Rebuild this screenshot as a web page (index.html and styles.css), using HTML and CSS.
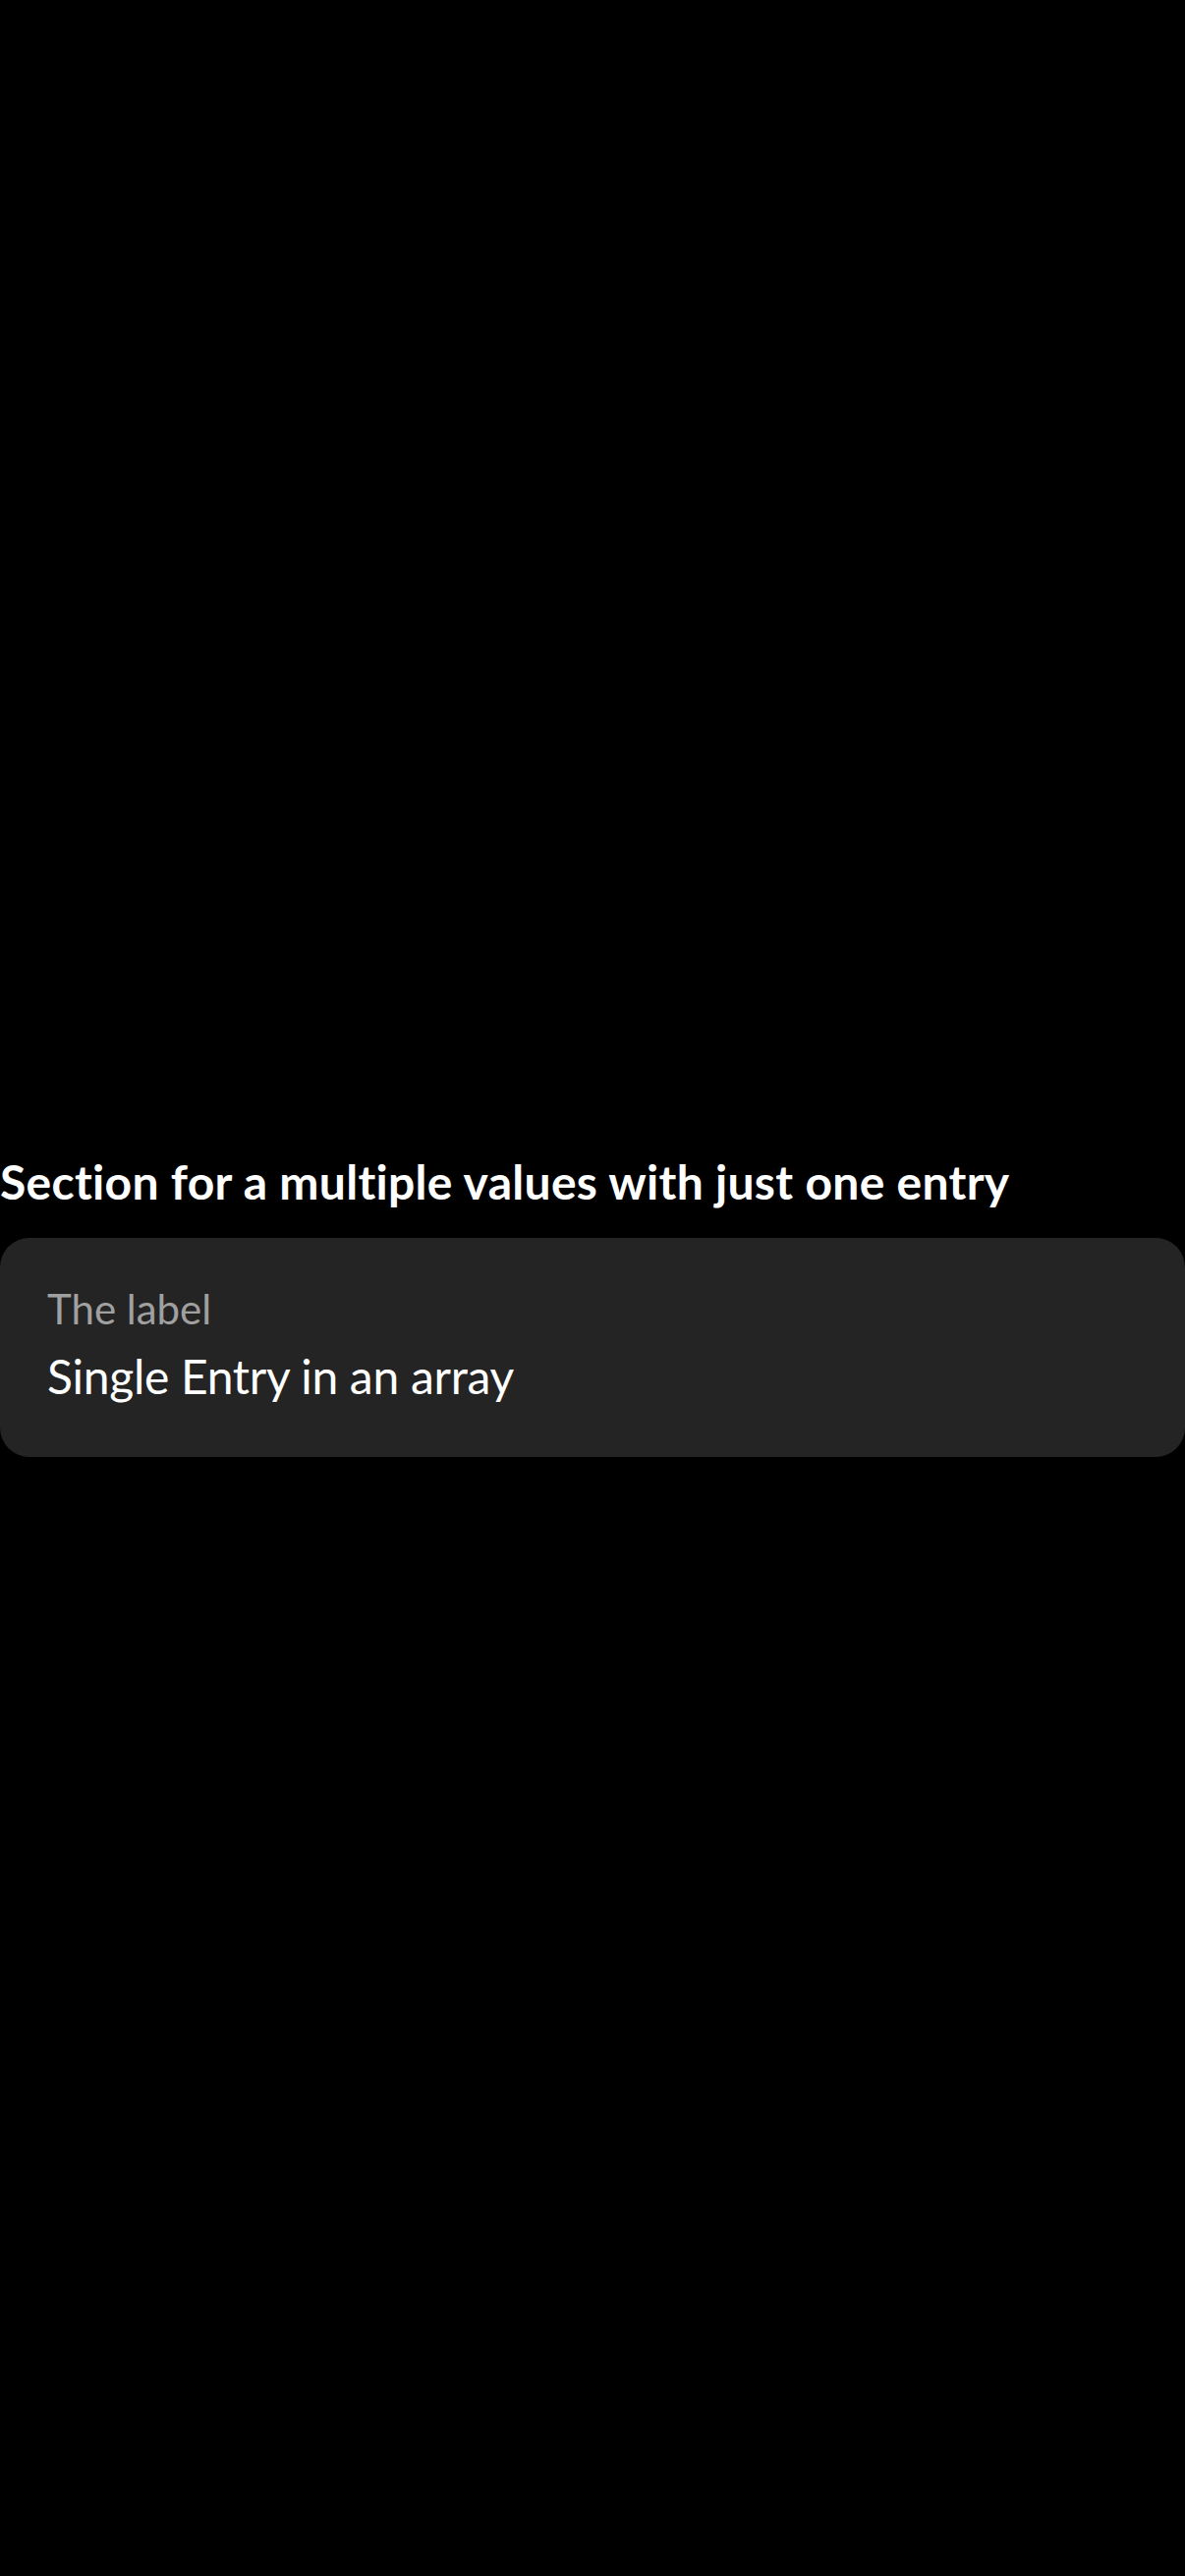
FILE: index.html
```html
<!DOCTYPE html>
<html>
<head>
<meta charset="utf-8">
<link rel="stylesheet" href="styles.css">
</head>
<body>
<main class="screen">
  <section class="section">
    <h2 class="section-title">Section for a multiple values with just one entry</h2>
    <div class="card">
      <div class="label">The label</div>
      <div class="value">Single Entry in an array</div>
    </div>
  </section>
</main>
</body>
</html>
```
FILE: styles.css
```css
html, body {
  margin: 0;
  padding: 0;
  background: #000;
}
body {
  width: 1206px;
  height: 2622px;
  overflow: hidden;
  font-family: Lato, "Open Sans", sans-serif;
  font-variant-ligatures: none;
  color: #fff;
}
.screen {
  display: flex;
  flex-direction: column;
  padding-top: 1171px;
}
.section {
  display: flex;
  flex-direction: column;
}
.section-title {
  margin: 0 0 25px;
  font-size: 48px;
  line-height: 64px;
  font-weight: 700;
  letter-spacing: 0.3px;
  white-space: nowrap;
}
.card {
  background: #242424;
  border-radius: 30px;
  padding: 46px 48px 52px;
  display: flex;
  flex-direction: column;
  gap: 13px;
}
.label {
  font-size: 42px;
  line-height: 52px;
  color: #a0a0a0;
}
.value {
  font-size: 48px;
  line-height: 60px;
  letter-spacing: -0.3px;
  color: #fff;
}
```
